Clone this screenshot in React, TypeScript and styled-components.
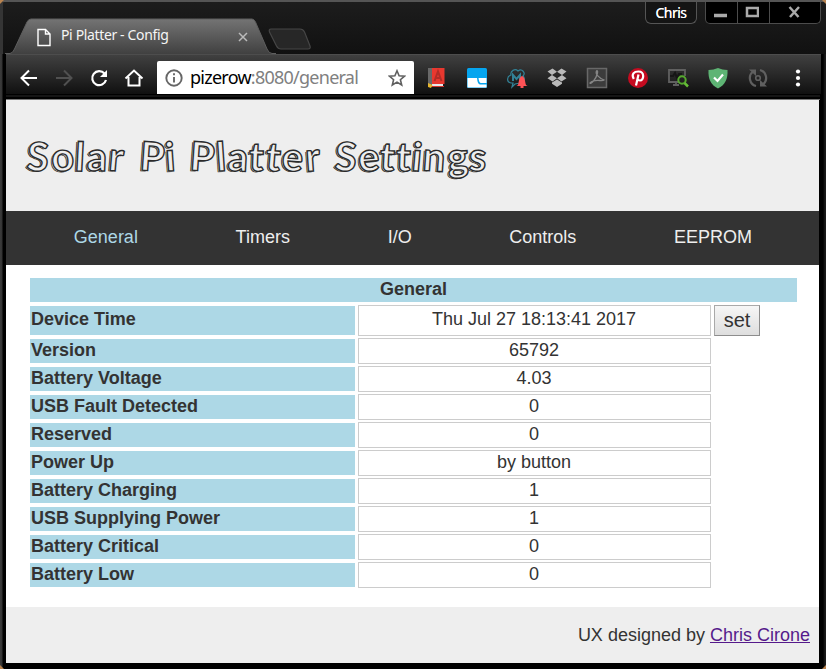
import React from "react";
import styled, { createGlobalStyle, css } from "styled-components";

const Global = createGlobalStyle`
  * { box-sizing: border-box; }
  html, body { margin: 0; padding: 0; background: #000; overflow: hidden; }
`;

const uiFont = `"Noto Sans", "Open Sans", sans-serif`;

const Window = styled.div`
  width: 826px;
  height: 669px;
  display: flex;
  flex-direction: column;
  position: relative;
  background: linear-gradient(90deg, #3c3c3c 0, #333 2px, #000 3px, #000 823px, #1a1a1a 825px);
  font-family: "Liberation Sans", Arial, sans-serif;
`;

const Corner = styled.i<{ $v: "top" | "bottom"; $h: "left" | "right" }>`
  position: absolute;
  ${(p) => p.$v}: 0;
  ${(p) => p.$h}: 0;
  width: 4px;
  height: 4px;
  background: #b9834f;
  clip-path: polygon(
    ${(p) => (p.$h === "left" ? "0 0, 100% 0, 0 100%" : "0 0, 100% 0, 100% 100%")}
  );
  ${(p) => p.$v === "bottom" && css`transform: scaleY(-1);`}
`;

const TitleBar = styled.header`
  height: 54px;
  display: flex;
  align-items: flex-end;
  padding-left: 5px;
  border-top: 2px solid #555;
  border-left: 3px solid #353535;
  border-radius: 4px 3px 0 0;
  background: linear-gradient(#1d1d1d, #111);
`;

const Tab = styled.div`
  position: relative;
  width: 268px;
  height: 36px;
  display: flex;
  align-items: center;
  padding-left: 29px;
`;

const TabShape = styled.svg`
  position: absolute;
  left: -3px;
  top: 0;
`;

const TabTitle = styled.span`
  position: relative;
  margin: -2px 0 0 10px;
  width: 176px;
  font: 14px/18px ${uiFont};
  letter-spacing: -0.36px;
  color: #f5f5f5;
`;

const TabIcon = styled.svg`
  position: relative;
  flex: none;
  margin-top: 2px;
`;

const NewTab = styled.svg`
  margin: 0 0 3px -9px;
`;

const Controls = styled.div`
  margin-left: auto;
  align-self: flex-start;
  display: flex;
  gap: 8px;
  padding-right: 5px;
`;

const Profile = styled.div`
  width: 52px;
  height: 22px;
  border: 1px solid #555;
  border-top: 0;
  border-radius: 0 0 6px 6px;
  background: #141414;
  color: #fff;
  text-align: center;
  font: 14px/21px ${uiFont};
  letter-spacing: -0.5px;
  text-shadow: 0 0 0.6px #fff;
`;

const WindowButtons = styled.div`
  display: flex;
  height: 22px;
  border: 1px solid #4c4c4c;
  border-top: 0;
  border-radius: 0 0 5px 5px;
  overflow: hidden;
  background: #000;
`;

const WindowButton = styled.button<{ $w: number }>`
  width: ${(p) => p.$w}px;
  padding: 0 3px 2px 0;
  border: 0;
  background: none;
  display: grid;
  place-items: center;
  & + & { border-left: 1px solid #4c4c4c; }
`;

const Toolbar = styled.div`
  height: 41px;
  margin: 0 5px 0 6px;
  display: flex;
  align-items: center;
  background: linear-gradient(#404040, #2b2b2b 45%, #101010);
  border-top: 1px solid #4d4d4d;
  border-bottom: 1px solid #000;
`;

const NavIcons = styled.div`
  width: 151px;
  padding: 7px 0 0 13px;
  display: flex;
  gap: 15px;
`;

const Address = styled.div`
  width: 257px;
  height: 33px;
  margin-top: 6px;
  padding: 0 8px 0 8px;
  display: flex;
  align-items: center;
  background: #fff;
  border-radius: 2px 2px 0 0;
`;

const Url = styled.span`
  flex: 1;
  margin: -1px 0 0 7px;
  font: 18px/24px ${uiFont};
  letter-spacing: -0.75px;
  white-space: nowrap;
  color: #808080;
`;

const Host = styled.b`
  font-weight: 400;
  color: #000;
`;

const Extensions = styled.div`
  flex: 1;
  padding: 7px 12px 0 12px;
  display: flex;
  justify-content: space-between;
`;

const ToolbarEdge = styled.div`
  height: 5px;
  margin: 0 6px;
  background: linear-gradient(#151515 0 2px, #000 2px 4px, #777 4px);
`;

const Page = styled.main`
  width: 813px;
  height: 563px;
  margin-left: 6px;
  background: #fff;
  color: #333;
  font-size: 18px;
  display: flex;
  flex-direction: column;
`;

const Banner = styled.div`
  height: 111px;
  padding: 32px 0 0 21px;
  background: #eee;
`;

const Title = styled.h1`
  margin: 0;
  display: flex;
  font: 700 40px/48px "Lato", sans-serif;
  color: #eee;
  -webkit-text-stroke: 1.4px #2b2b2b;
  text-shadow: -1px 0.5px 0 #ddd, -2px 1px 0 #333;
`;

const Word = styled.span<{ $w: number; $ls: number }>`
  width: ${(p) => p.$w}px;
  letter-spacing: ${(p) => p.$ls}px;
  white-space: nowrap;
`;

const Letter = styled.span<{ $r: number }>`
  display: inline-block;
  transform: rotate(${(p) => p.$r}deg);
`;

const Menu = styled.nav`
  height: 54px;
  padding: 0 18px 0 19px;
  display: flex;
  justify-content: space-around;
  background: #333;
`;

const MenuLink = styled.a<{ $active?: boolean }>`
  line-height: 52px;
  text-decoration: none;
  color: ${(p) => (p.$active ? "#add8e6" : "#eee")};
`;

const Content = styled.section`
  flex: 1;
  padding: 13px 22px 0 24px;
  display: flex;
  flex-direction: column;
  gap: 2px;
`;

const Heading = styled.div`
  height: 24px;
  margin-bottom: 1px;
  background: #add8e6;
  text-align: center;
  font-weight: 700;
  line-height: 22px;
`;

const Row = styled.div<{ $tall?: boolean }>`
  height: ${(p) => (p.$tall ? 31 : 26)}px;
  display: grid;
  grid-template-columns: 325px 353px 46px;
  column-gap: 3px;
  line-height: ${(p) => (p.$tall ? 27 : 22)}px;
`;

const Label = styled.div`
  margin: 1px 0;
  padding-left: 1px;
  background: #add8e6;
  font-weight: 700;
`;

const Value = styled.div`
  border: 1px solid #ccc;
  padding-right: 1px;
  text-align: center;
`;

const SetButton = styled.button`
  padding: 0;
  border: 1px solid #999;
  border-color: #a9a9a9 #8d8d8d #8d8d8d #a9a9a9;
  background: linear-gradient(#f6f6f6, #dedede);
  color: #333;
  font: 20px/27px "Liberation Sans", Arial, sans-serif;
`;

const Footer = styled.footer`
  height: 56px;
  padding-right: 9px;
  background: #eee;
  text-align: right;
  line-height: 57px;
`;

const Credit = styled.a`
  color: #551a8b;
  text-decoration: underline;
`;

const words: { text: string; width: number; spacing: number }[] = [
  { text: "Solar", width: 113, spacing: 1.6 },
  { text: "Pi", width: 50, spacing: 0 },
  { text: "Platter", width: 145, spacing: 1.4 },
  { text: "Settings", width: 165, spacing: 1 },
];

const tilts = [4, -4, 3, 2, 5];

const rows: [string, string][] = [
  ["Device Time", "Thu Jul 27 18:13:41 2017"],
  ["Version", "65792"],
  ["Battery Voltage", "4.03"],
  ["USB Fault Detected", "0"],
  ["Reserved", "0"],
  ["Power Up", "by button"],
  ["Battery Charging", "1"],
  ["USB Supplying Power", "1"],
  ["Battery Critical", "0"],
  ["Battery Low", "0"],
];

const NavGlyph = ({ d, color = "#fff" }: { d: string; color?: string }) => (
  <svg width="20" height="20" viewBox="0 0 20 20" fill="none" stroke={color} strokeWidth="2">
    <path d={d} />
  </svg>
);

const Icon = ({ children }: { children: React.ReactNode }) => (
  <svg width="22" height="22" viewBox="0 0 22 22" fill="none">{children}</svg>
);

export default function App() {
  return (
    <Window>
      <Global />
      <TitleBar>
        <Tab>
          <TabShape width="271" height="36" viewBox="0 0 271 36">
            <defs>
              <linearGradient id="tab" x2="0" y2="1">
                <stop stopColor="#747474" />
                <stop offset="1" stopColor="#404040" />
              </linearGradient>
            </defs>
            <path d="M0 36V35.5H5Q8 35 9.500 31L22 4Q23.500 1 26 1H247Q249 1 250.500 4L262 31Q264 35.500 267 35.500H271V36Z" fill="url(#tab)" />
            <path d="M0 35.500H5Q8 35 9.500 31L22 4Q23.500 1 26 1H247Q249 1 250.500 4L262 31Q264 35.500 267 35.500H271" fill="none" stroke="#5e5e5e" />
          </TabShape>
          <TabIcon width="14" height="19" viewBox="0 0 14 19">
            <path d="M1 1.500H8.500L13 6V17.500H1ZM8.500 1.500V6H13" fill="none" stroke="#fff" strokeWidth="1.400" />
          </TabIcon>
          <TabTitle>Pi Platter - Config</TabTitle>
          <TabIcon width="12" height="12" viewBox="0 0 12 12" stroke="#bbb" strokeWidth="1.500">
            <path d="M2 2l8 8M10 2l-8 8" />
          </TabIcon>
        </Tab>
        <NewTab width="46" height="24" viewBox="0 0 46 24">
          <path d="M4 2H33Q36 2 37.500 5L43 19Q44 22 41 22H14Q11 22 9.500 19L2.500 5Q1.500 2 4 2Z" fill="#272727" stroke="#464646" strokeWidth="1.200" />
        </NewTab>
        <Controls>
          <Profile>Chris</Profile>
          <WindowButtons>
            <WindowButton $w={31} aria-label="Minimize">
              <svg width="14" height="16"><path d="M1 11.500H14" stroke="#aaa" strokeWidth="3.500" /></svg>
            </WindowButton>
            <WindowButton $w={32} aria-label="Maximize">
              <svg width="14" height="16"><rect x="2" y="4" width="11" height="8" fill="none" stroke="#aaa" strokeWidth="2.500" /></svg>
            </WindowButton>
            <WindowButton $w={51} aria-label="Close">
              <svg width="14" height="16"><path d="M2.500 3l9 10M12 3l-9 10" stroke="#aaa" strokeWidth="2.500" /></svg>
            </WindowButton>
          </WindowButtons>
        </Controls>
      </TitleBar>

      <Toolbar>
        <NavIcons>
          <NavGlyph d="M18 10H3M10 2.500L2.500 10L10 17.500" />
          <NavGlyph color="#505050" d="M2 10H17M10 2.500L17.500 10L10 17.500" />
          <svg width="20" height="20" viewBox="0 0 20 20">
            <path d="M15.500 5.500A7 7 0 1 0 17 12" fill="none" stroke="#fff" strokeWidth="2.200" />
            <path d="M18 2V9H11Z" fill="#fff" />
          </svg>
          <NavGlyph d="M1.500 10.500L10 2.500L18.500 10.500M4.500 9V17.500H15.500V9" />
        </NavIcons>
        <Address>
          <svg width="18" height="18" viewBox="0 0 18 18" fill="none" stroke="#666" strokeWidth="1.900">
            <circle cx="9" cy="9" r="7.700" />
            <path d="M9 8V13.500M9 4.300V6.300" />
          </svg>
          <Url><Host>pizerow</Host>:8080/general</Url>
          <svg width="18" height="18" viewBox="0 0 18 18" fill="none" stroke="#606060" strokeWidth="1.600">
            <path d="M9 1.800L11.100 6.800L16.500 7.200L12.400 10.700L13.700 16L9 13.100L4.300 16L5.600 10.700L1.500 7.200L6.900 6.800Z" />
          </svg>
        </Address>
        <Extensions>
          <Icon>
            <path d="M2 1H6V18H2Z" fill="#686868" />
            <path d="M6 1H18.500V17H6Z" fill="#e8382f" />
            <path d="M8.500 14L12 4.500L15.500 14M10 11H14" stroke="#b12d27" strokeWidth="2" />
            <path d="M6 17H17V19H6Z" fill="#e8e8ee" />
            <path d="M5 19.500H18" stroke="#d2362e" />
            <path d="M2 16L6.500 18L5 21L2 20Z" fill="#e6b62e" />
          </Icon>
          <Icon>
            <rect x="1" y="1" width="20" height="20" rx="1.500" fill="#05a5ef" />
            <path d="M1.500 11H11Q11.500 17 14 17.500H20.500V20.500H1.500ZM12.500 11H20.500V16H15Q13 16 12.500 11Z" fill="#fff" />
          </Icon>
          <Icon>
            <path d="M5 16C0 15 1 9 5 8C4 4 9 1 12 4C16 1 20 6 17 9C20 12 17 17 14 16L9 17L6 20L7 16Z" stroke="#328297" strokeWidth="1.200" />
            <path d="M7 14V8L10.500 12L14 8V14" stroke="#328297" strokeWidth="2" />
            <path d="M16 9C13 10 13 15 12 18L10.500 19H21.500L20 18C19 15 19 10 16 9ZM14.500 19H17.500V21H14.500Z" fill="#ff5256" />
          </Icon>
          <Icon>
            <path d="M6.500 1.500L11 4.800L6 8L1.500 4.500ZM15.500 1.500L20.500 4.500L16 8L11 4.800ZM6 8L11 11.200L6.500 14.500L1.500 11.200ZM16 8L20.500 11.200L15.500 14.500L11 11.200ZM6 15.500L11 12.500L16 15.500V16.800L11 20L6 16.800Z" fill="#b9b9b9" />
          </Icon>
          <Icon>
            <rect x="1.500" y="1.500" width="19" height="19" fill="#3c3c3c" stroke="#686868" strokeWidth="1.500" />
            <path d="M10.500 4C9 7 13 11 18 13C16 15 9 11 4 16C4 18 10 13 11.500 6C12 4 11 3 10.500 4Z" stroke="#858585" strokeWidth="1.300" />
          </Icon>
          <Icon>
            <circle cx="11" cy="11" r="10" fill="#c50b20" />
            <path d="M6.800 12C4 7 7 4.500 11.500 4.500C18 4.500 17 13.500 13 13.500Q11 13.500 10.500 12M11.500 7.500L9 18.500" stroke="#fff" strokeWidth="2.200" />
          </Icon>
          <Icon>
            <path d="M12 15H2V3H18V9" stroke="#606060" strokeWidth="1.800" />
            <path d="M3 9H6L8 6L10 11L12 7H15" stroke="#161616" strokeWidth="2" />
            <path d="M9 15V18M6 18H12" stroke="#606060" strokeWidth="1.800" />
            <circle cx="15" cy="13" r="3.700" stroke="#55a92e" strokeWidth="2" />
            <path d="M17.500 16L21 19.500" stroke="#66bd38" strokeWidth="2.500" />
          </Icon>
          <Icon>
            <path d="M11 1C14 2 17 3 20.500 3C21 12 18 18 11 21.500C4 18 1 12 1.500 3C5 3 8 2 11 1Z" fill="#5eb474" />
            <path d="M7 10.500L10.500 14L16 7.500" stroke="#fff" strokeWidth="2.200" />
          </Icon>
          <Icon>
            <path d="M9 19A8.300 8.300 0 0 1 6 4.500M13 3A8.300 8.300 0 0 1 16 17.500" stroke="#606060" strokeWidth="2.200" />
            <path d="M2 2.500H9V9ZM20 19.500H13V13Z" fill="#606060" />
            <circle cx="11" cy="11" r="2.300" stroke="#606060" strokeWidth="1.600" />
          </Icon>
          <Icon>
            <g fill="#fff"><circle cx="11" cy="4.500" r="2.100" /><circle cx="11" cy="11" r="2.100" /><circle cx="11" cy="17.500" r="2.100" /></g>
          </Icon>
        </Extensions>
      </Toolbar>
      <ToolbarEdge />

      <Page>
        <Banner>
          <Title>
            {words.map((w) => (
              <Word key={w.text} $w={w.width} $ls={w.spacing}>
                {w.text.split("").map((c, i) => (
                  <Letter key={i} $r={tilts[i % tilts.length]}>{c}</Letter>
                ))}
              </Word>
            ))}
          </Title>
        </Banner>
        <Menu>
          <MenuLink $active>General</MenuLink>
          <MenuLink>Timers</MenuLink>
          <MenuLink>I/O</MenuLink>
          <MenuLink>Controls</MenuLink>
          <MenuLink>EEPROM</MenuLink>
        </Menu>
        <Content>
          <Heading>General</Heading>
          {rows.map(([label, value], i) => (
            <Row key={label} $tall={i === 0}>
              <Label>{label}</Label>
              <Value>{value}</Value>
              {i === 0 && <SetButton>set</SetButton>}
            </Row>
          ))}
        </Content>
        <Footer>UX designed by <Credit>Chris Cirone</Credit></Footer>
      </Page>
      <Corner $v="top" $h="left" />
      <Corner $v="top" $h="right" />
      <Corner $v="bottom" $h="left" />
      <Corner $v="bottom" $h="right" />
    </Window>
  );
}
